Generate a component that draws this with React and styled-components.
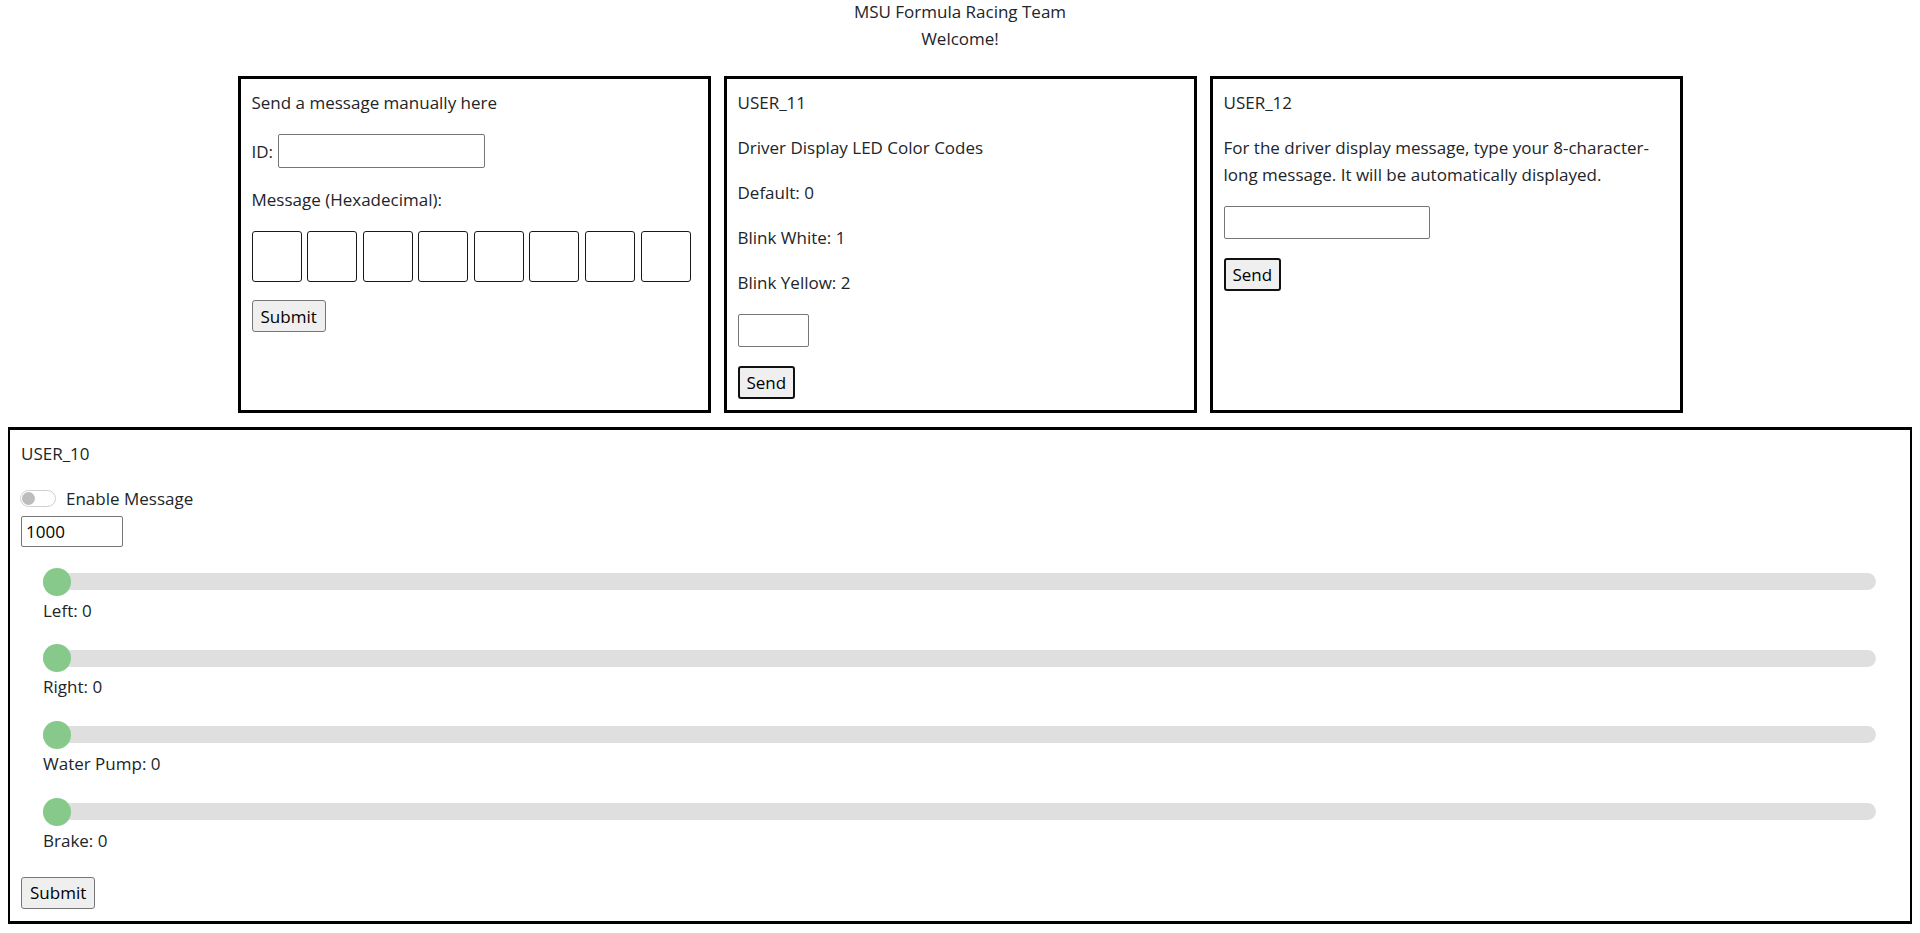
import React, { useState } from 'react';
import styled, { createGlobalStyle } from 'styled-components';

const GlobalStyle = createGlobalStyle`
  * { box-sizing: border-box; }
  body {
    margin: 0 8px 8px;
    font-family: "Open Sans", "Noto Sans", "DejaVu Sans", sans-serif;
    font-size: 17px;
    line-height: 27px;
    color: #212529;
    background: #fff;
  }
`;

const Header = styled.header`
  margin-top: -2px;
  text-align: center;
`;

const TopRow = styled.div`
  display: flex;
  justify-content: center;
  gap: 13px;
  margin-top: 24px;
`;

const Panel = styled.section`
  width: ${(props) => (props.$wide ? 'auto' : '473px')};
  margin: ${(props) => (props.$wide ? '14px -1px 0' : '0')};
  border: 3px solid #000;
  padding: ${(props) => (props.$wide ? '10px 11px 12px' : '10px 11px 11px')};
`;

const Text = styled.p`
  margin: 0 0 18px;
`;

const FieldRow = styled.div`
  display: flex;
  align-items: center;
  gap: 5px;
  margin-bottom: 18px;
`;

const TextInput = styled.input`
  display: block;
  width: ${(props) => props.$w}px;
  height: ${(props) => props.$h || 33}px;
  border: 1px solid #767676;
  border-radius: 2px;
  padding: 1px 4px;
  font-family: inherit;
  font-size: 17px;
  color: #000;
  background: #fff;
  margin: 0;
`;

const HexRow = styled.div`
  display: flex;
  gap: 5.6px;
  margin-bottom: 18px;
`;

const HexBox = styled.input`
  width: 50px;
  height: 51px;
  border: 1px solid #1a1a1a;
  border-radius: 3px;
  margin: 0;
  padding: 0;
  text-align: center;
  font-family: inherit;
  font-size: 17px;
`;

const Button = styled.button`
  display: block;
  height: ${(props) => (props.$strong ? 33 : 32)}px;
  margin: ${(props) => props.$mt || 0}px 0 0;
  padding: 0 ${(props) => (props.$strong ? 7 : 8)}px;
  font-family: inherit;
  font-size: 17px;
  color: #000;
  background: #efefef;
  border: ${(props) => (props.$strong ? '2px solid #111' : '1px solid #767676')};
  border-radius: 3px;
  cursor: pointer;
`;

const ToggleRow = styled.label`
  display: flex;
  align-items: center;
  gap: 10px;
  height: 27px;
  cursor: pointer;
`;

const Toggle = styled.span`
  position: relative;
  width: 36px;
  height: 17px;
  margin-left: -1px;
  border: 1px solid #cfcfcf;
  border-radius: 9px;
  background: ${(props) => (props.$on ? '#86c98a' : '#fff')};

  &::after {
    content: '';
    position: absolute;
    top: 1px;
    left: ${(props) => (props.$on ? '20px' : '1px')};
    width: 13px;
    height: 13px;
    border-radius: 50%;
    background: #bdbdbd;
  }
`;

const SliderBlock = styled.div`
  margin-top: 19.67px;
  padding: 0 23px 0 22px;
`;

const Range = styled.input`
  display: block;
  width: 100%;
  height: 30px;
  margin: 0;
  background: transparent;
  -webkit-appearance: none;
  appearance: none;

  &::-webkit-slider-runnable-track {
    height: 17px;
    border-radius: 9px;
    background: #dfdfdf;
  }
  &::-webkit-slider-thumb {
    -webkit-appearance: none;
    width: 28px;
    height: 28px;
    margin-top: -5.5px;
    border: none;
    border-radius: 50%;
    background: #86c98a;
  }
  &::-moz-range-track {
    height: 17px;
    border-radius: 9px;
    background: #dfdfdf;
  }
  &::-moz-range-thumb {
    width: 28px;
    height: 28px;
    border: none;
    border-radius: 50%;
    background: #86c98a;
  }
`;

const SliderLabel = styled.div`
  height: 27px;
`;

const sliders = ['Left', 'Right', 'Water Pump', 'Brake'];

const App = () => {
  const [enabled, setEnabled] = useState(false);
  const [values, setValues] = useState([0, 0, 0, 0]);

  const setValue = (index, value) => {
    setValues((prev) => prev.map((v, i) => (i === index ? value : v)));
  };

  return (
    <>
      <GlobalStyle />
      <Header>
        <div>MSU Formula Racing Team</div>
        <div>Welcome!</div>
      </Header>

      <TopRow>
        <Panel>
          <Text>Send a message manually here</Text>
          <FieldRow>
            <span>ID:</span>
            <TextInput $w={207} $h={34} />
          </FieldRow>
          <Text>Message (Hexadecimal):</Text>
          <HexRow>
            {Array.from({ length: 8 }).map((_, i) => (
              <HexBox key={i} maxLength={2} />
            ))}
          </HexRow>
          <Button>Submit</Button>
        </Panel>

        <Panel>
          <Text>USER_11</Text>
          <Text>Driver Display LED Color Codes</Text>
          <Text>Default: 0</Text>
          <Text>Blink White: 1</Text>
          <Text>Blink Yellow: 2</Text>
          <TextInput $w={71} />
          <Button $strong $mt={19}>Send</Button>
        </Panel>

        <Panel>
          <Text>USER_12</Text>
          <Text>
            For the driver display message, type your 8-character-long message. It will be
            automatically displayed.
          </Text>
          <TextInput $w={206} maxLength={8} />
          <Button $strong $mt={19}>Send</Button>
        </Panel>
      </TopRow>

      <Panel $wide>
        <Text>USER_10</Text>
        <ToggleRow onClick={() => setEnabled((v) => !v)}>
          <Toggle $on={enabled} />
          <span>Enable Message</span>
        </ToggleRow>
        <TextInput $w={102} $h={31} defaultValue="1000" style={{ marginTop: 4 }} />
        {sliders.map((name, i) => (
          <SliderBlock key={name}>
            <Range
              type="range"
              min={0}
              max={100}
              value={values[i]}
              onChange={(e) => setValue(i, Number(e.target.value))}
            />
            <SliderLabel>
              {name}: {values[i]}
            </SliderLabel>
          </SliderBlock>
        ))}
        <Button $mt={23}>Submit</Button>
      </Panel>
    </>
  );
};

export default App;
